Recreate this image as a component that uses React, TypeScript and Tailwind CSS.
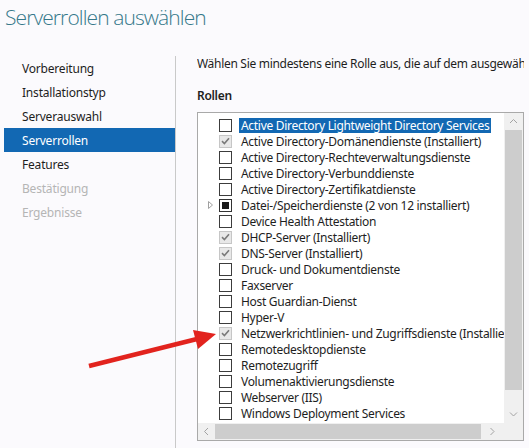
const font = "font-['Noto_Sans','Open_Sans',sans-serif]";

type RoleState = "off" | "on" | "partial";

const roles: { name: string; state: RoleState; selected?: boolean; expander?: boolean }[] = [
  { name: "Active Directory Lightweight Directory Services", state: "off", selected: true },
  { name: "Active Directory-Domänendienste (Installiert)", state: "on" },
  { name: "Active Directory-Rechteverwaltungsdienste", state: "off" },
  { name: "Active Directory-Verbunddienste", state: "off" },
  { name: "Active Directory-Zertifikatdienste", state: "off" },
  { name: "Datei-/Speicherdienste (2 von 12 installiert)", state: "partial", expander: true },
  { name: "Device Health Attestation", state: "off" },
  { name: "DHCP-Server (Installiert)", state: "on" },
  { name: "DNS-Server (Installiert)", state: "on" },
  { name: "Druck- und Dokumentdienste", state: "off" },
  { name: "Faxserver", state: "off" },
  { name: "Host Guardian-Dienst", state: "off" },
  { name: "Hyper-V", state: "off" },
  { name: "Netzwerkrichtlinien- und Zugriffsdienste (Installiert)", state: "on" },
  { name: "Remotedesktopdienste", state: "off" },
  { name: "Remotezugriff", state: "off" },
  { name: "Volumenaktivierungsdienste", state: "off" },
  { name: "Webserver (IIS)", state: "off" },
  { name: "Windows Deployment Services", state: "off" },
];

const steps = [
  { label: "Vorbereitung" },
  { label: "Installationstyp" },
  { label: "Serverauswahl" },
  { label: "Serverrollen", active: true },
  { label: "Features" },
  { label: "Bestätigung", disabled: true },
  { label: "Ergebnisse", disabled: true },
];

function Checkbox({ state }: { state: RoleState }) {
  if (state === "on") {
    return (
      <span className="flex h-[13px] w-[13px] shrink-0 items-center justify-center border border-[#c6c6c6] bg-[#e8e8e8]">
        <svg width="9" height="8" viewBox="0 0 9 8">
          <path d="M1 4.2 L3.4 6.5 L8 1.2" fill="none" stroke="#7a7a7a" strokeWidth="1.6" />
        </svg>
      </span>
    );
  }
  if (state === "partial") {
    return (
      <span className="flex h-[13px] w-[13px] shrink-0 items-center justify-center border border-[#333] bg-white">
        <span className="h-[7px] w-[7px] bg-[#1a1a1a]" />
      </span>
    );
  }
  return <span className="h-[13px] w-[13px] shrink-0 border border-[#3c3c3c] bg-white" />;
}

function Chevron({ dir }: { dir: "up" | "down" | "left" | "right" }) {
  const d = {
    up: "M1 5 L4.5 1.5 L8 5",
    down: "M1 1.5 L4.5 5 L8 1.5",
    left: "M5 1 L1.5 4.5 L5 8",
    right: "M1.5 1 L5 4.5 L1.5 8",
  }[dir];
  const vertical = dir === "up" || dir === "down";
  return (
    <svg width={vertical ? 9 : 7} height={vertical ? 7 : 9} viewBox={vertical ? "0 0 9 7" : "0 0 7 9"}>
      <path d={d} fill="none" stroke="#a3a3a3" strokeWidth="1" />
    </svg>
  );
}

export default function App() {
  return (
    <div className={`relative flex h-[448px] w-[529px] flex-col overflow-hidden bg-[#fbfafd] text-[#1e1e1e] ${font}`}>
      <h1 className="pl-[5px] pt-[2px] font-['Open_Sans','Noto_Sans',sans-serif] text-[21px] font-light leading-[30px] tracking-[-0.9px] text-[#35788a]">
        Serverrollen auswählen
      </h1>

      <div className="mt-[24px] flex min-h-0 flex-1">
        {/* Wizard steps */}
        <nav className="w-[176px] shrink-0 border-r border-[#c9c9c9] pl-[4px] text-[12px] tracking-[-0.2px]">
          {steps.map((s) => (
            <div
              key={s.label}
              className={`flex h-[24px] items-center pl-[18px] pt-[1px] ${
                s.active ? "bg-[#1268b3] text-white" : s.disabled ? "text-[#b5b5b5]" : ""
              }`}
            >
              {s.label}
            </div>
          ))}
        </nav>

        {/* Content */}
        <main className="flex min-w-0 flex-1 flex-col pl-[21px] pr-[5px] text-[12px] tracking-[-0.3px]">
          <p className="overflow-hidden whitespace-nowrap leading-[16px]">
            Wählen Sie mindestens eine Rolle aus, die auf dem ausgewählten Server installiert werden soll.
          </p>
          <h2 className="mt-[16px] font-semibold leading-[16px]">Rollen</h2>

          <div className="mt-[8px] grid h-[329px] grid-cols-[1fr_19px] grid-rows-[1fr_17px] border border-[#a9a9a9] bg-white">
            <div className="overflow-hidden pt-[4px]">
              {roles.map((r) => (
                <div key={r.name} className="flex h-[16px] items-center whitespace-nowrap">
                  <span className="flex w-[21px] shrink-0 justify-end pr-[6px]">
                    {r.expander && (
                      <svg width="5" height="8" viewBox="0 0 5 8">
                        <path d="M0.5 0.5 L4.5 4 L0.5 7.5 Z" fill="none" stroke="#a0a0a0" strokeWidth="1" />
                      </svg>
                    )}
                  </span>
                  <Checkbox state={r.state} />
                  <span
                    className={`ml-[7px] px-[2px] leading-[15px] ${r.selected ? "bg-[#1268b3] text-white" : ""}`}
                  >
                    {r.name}
                  </span>
                </div>
              ))}
            </div>

            {/* vertical scrollbar */}
            <div className="flex flex-col bg-[#f0f0f0]">
              <div className="flex h-[17px] items-center justify-center">
                <Chevron dir="up" />
              </div>
              <div className="mx-[1px] h-[260px] bg-[#cdcdcd]" />
              <div className="flex flex-1 items-end justify-center pb-[5px]">
                <Chevron dir="down" />
              </div>
            </div>

            {/* horizontal scrollbar */}
            <div className="flex items-center bg-[#f0f0f0]">
              <div className="flex w-[17px] justify-center">
                <Chevron dir="left" />
              </div>
              <div className="my-[1px] h-[15px] w-[266px] bg-[#cdcdcd]" />
              <div className="flex flex-1 justify-center">
                <Chevron dir="right" />
              </div>
            </div>
            <div className="bg-[#f0f0f0]" />
          </div>
        </main>
      </div>

      {/* Red annotation arrow */}
      <svg className="pointer-events-none absolute left-0 top-0" width="529" height="448">
        <line x1="89" y1="366" x2="197" y2="339" stroke="#e2231e" strokeWidth="4.5" />
        <polygon points="216,334 193,330 198,349" fill="#e2231e" />
      </svg>
    </div>
  );
}
